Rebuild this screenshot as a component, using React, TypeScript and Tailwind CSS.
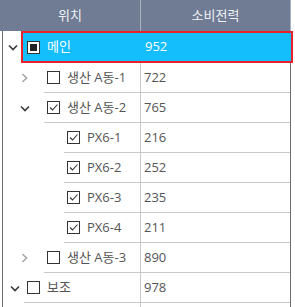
import React from "react";

type Node = {
  label: string;
  value: number;
  level: number;
  expanded?: boolean;
  hasChildren?: boolean;
  checked: "on" | "off" | "mixed";
  selected?: boolean;
};

const rows: Node[] = [
  { label: "메인", value: 952, level: 0, hasChildren: true, expanded: true, checked: "mixed", selected: true },
  { label: "생산 A동-1", value: 722, level: 1, hasChildren: true, checked: "off" },
  { label: "생산 A동-2", value: 765, level: 1, hasChildren: true, expanded: true, checked: "on" },
  { label: "PX6-1", value: 216, level: 2, checked: "on" },
  { label: "PX6-2", value: 252, level: 2, checked: "on" },
  { label: "PX6-3", value: 235, level: 2, checked: "on" },
  { label: "PX6-4", value: 211, level: 2, checked: "on" },
  { label: "생산 A동-3", value: 890, level: 1, hasChildren: true, checked: "off" },
  { label: "보조", value: 978, level: 0, hasChildren: true, expanded: true, checked: "off" },
];

const Chevron = ({ expanded }: { expanded?: boolean }) =>
  expanded ? (
    <svg width="10" height="7" viewBox="0 0 10 7" fill="none">
      <path d="M1 1.5 L5 5.5 L9 1.5" stroke="#3a3a3a" strokeWidth="1.6" />
    </svg>
  ) : (
    <svg width="7" height="10" viewBox="0 0 7 10" fill="none">
      <path d="M1.5 1 L5.5 5 L1.5 9" stroke="#a8a8a8" strokeWidth="1.6" />
    </svg>
  );

const CheckBox = ({ state }: { state: Node["checked"] }) => (
  <div className="w-[13px] h-[13px] shrink-0 border border-[#333] bg-white flex items-center justify-center">
    {state === "mixed" && <div className="w-[7px] h-[7px] bg-[#222]" />}
    {state === "on" && (
      <svg width="11" height="11" viewBox="0 0 11 11" fill="none">
        <path d="M2 5.5 L4.5 8 L9.5 2.5" stroke="#333" strokeWidth="1.1" />
      </svg>
    )}
  </div>
);

const Row = ({ row }: { row: Node }) => {
  const indent = row.level * 20;
  if (row.selected) {
    return (
      <div className="flex h-[32px] shrink-0">
        <div className="w-[18px] flex items-center justify-center pl-[2px]">
          {row.hasChildren && <Chevron expanded={row.expanded} />}
        </div>
        <div className="flex-1 flex items-center border-2 border-[#e8222b] bg-[#14bdfb] text-white mr-[-3px]">
          <div className="w-[119px] flex items-center gap-[7px] pl-[4px]">
            <CheckBox state={row.checked} />
            <span>{row.label}</span>
          </div>
          <div className="pl-[3px]">{row.value}</div>
        </div>
      </div>
    );
  }
  return (
    <div className="flex h-[30px] shrink-0">
      <div style={{ width: indent + 21 }} className="flex items-center justify-center shrink-0 pl-[2px]">
        {row.hasChildren && <Chevron expanded={row.expanded} />}
      </div>
      <div className="flex-1 flex border-b border-[#c9c9c9]">
        <div
          style={{ width: 141 - 3 - indent - 21 }}
          className="flex items-center gap-[7px] pl-[3px] border-r border-[#c9c9c9] text-[#555]"
        >
          <CheckBox state={row.checked} />
          <span>{row.label}</span>
        </div>
        <div className="flex items-center pl-[3px] text-[#555]">{row.value}</div>
      </div>
    </div>
  );
};

export default function App() {
  return (
    <div
      className="w-[295px] h-[307px] overflow-hidden bg-white flex flex-col text-[13px]"
      style={{ fontFamily: '"Open Sans", "Noto Sans CJK KR", sans-serif' }}
    >
      <div className="w-[291px] h-[31px] shrink-0 flex bg-[#6f7c93] text-[#f0f2f6]">
        <div className="w-[141px] flex items-center justify-center border-r border-[#a9b1bf]">위치</div>
        <div className="flex-1 flex items-center justify-center border-r border-[#a9b1bf]">소비전력</div>
      </div>
      <div className="ml-[2px] w-[289px] flex-1 flex flex-col border-l border-r border-[#6e6e6e]">
        {rows.map((r, i) => (
          <Row key={i} row={r} />
        ))}
        <div className="flex flex-1">
          <div className="w-[138px] border-r border-[#c9c9c9]" />
        </div>
      </div>
    </div>
  );
}
